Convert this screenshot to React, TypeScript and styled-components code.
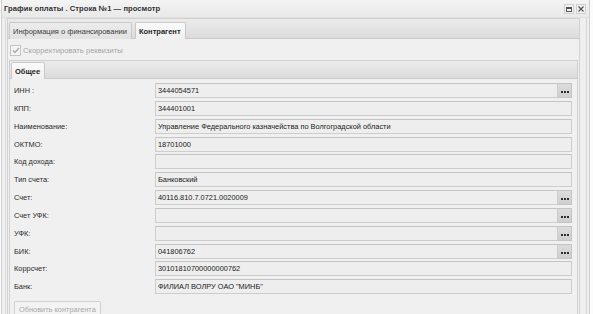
import React from "react";
import styled, { createGlobalStyle } from "styled-components";

const GlobalStyle = createGlobalStyle`
  body {
    margin: 0;
    background: #fbfbfb;
    font-family: "Liberation Sans", Arial, sans-serif;
  }
`;

const Window = styled.div`
  width: 589px;
  height: 330px;
  margin-left: 1px;
  border: 1px solid #cfcfcf;
  border-top: none;
  background: #efefef;
  box-sizing: border-box;
`;

const TitleBar = styled.div`
  height: 17px;
  display: flex;
  align-items: center;
  justify-content: space-between;
  padding: 0 3px 0 2px;
  background: linear-gradient(180deg, #f4f4f4 0%, #e9e9e9 100%);
  border-bottom: 1px solid #e0e0e0;
`;

const Title = styled.span`
  font-size: 7.6px;
  font-weight: bold;
  color: #333;
  letter-spacing: 0.05px;
`;

const Tools = styled.div`
  display: flex;
  gap: 2px;
  margin-top: 1px;
`;

const ToolBtn = styled.div`
  width: 8px;
  height: 8px;
  border: 1px solid #cfcfcf;
  background: #f2f2f2;
  display: flex;
  align-items: center;
  justify-content: center;
`;

const Body = styled.div`
  padding: 0 6px 0 1px;
  border-left: 1px solid #dadada;
  border-right: 1px solid #d4d4d4;
  margin: 0 2px 0 3px;
  height: 320px;
`;

const Panel = styled.div<{ $inner?: boolean }>`
  border: 1px solid #d2d2d2;
  border-top: none;
  margin-left: ${(p) => (p.$inner ? "1px" : "0")};
  margin-right: ${(p) => (p.$inner ? "1px" : "0")};
  background: #f0f0f0;
`;

const Strip = styled.div<{ $h: number }>`
  height: ${(p) => p.$h}px;
  display: flex;
  align-items: flex-end;
  gap: 3px;
  padding-left: 1px;
  background: linear-gradient(180deg, #ebebeb 0%, #dcdcdc 100%);
  border: 1px solid #d0d0d0;
  border-bottom: 1px solid #cacaca;
  margin: 0 -1px;
  box-sizing: border-box;
`;

const Tab = styled.div<{ $active?: boolean }>`
  height: 16px;
  padding: 0 4px 0 3px;
  display: flex;
  align-items: center;
  font-size: 7.5px;
  color: ${(p) => (p.$active ? "#1e1e1e" : "#3a3a3a")};
  font-weight: ${(p) => (p.$active ? "bold" : "normal")};
  border: 1px solid #c9c9c9;
  border-bottom: none;
  border-radius: 2px 2px 0 0;
  margin-bottom: -1px;
  background: ${(p) =>
    p.$active
      ? "linear-gradient(180deg, #fafafa 0%, #f0f0f0 100%)"
      : "linear-gradient(180deg, #ececec 0%, #e2e2e2 100%)"};
`;

const CheckRow = styled.label`
  display: flex;
  align-items: center;
  gap: 2px;
  height: 20px;
  padding: 1px 0 0 2px;
  font-size: 7.6px;
  color: #a6a6a6;
`;

const Check = styled.span`
  width: 9px;
  height: 9px;
  border: 1px solid #c4c4c4;
  background: #f4f4f4;
  display: flex;
  align-items: center;
  justify-content: center;
`;

const Form = styled.div`
  display: grid;
  grid-template-columns: 141px 1fr;
  row-gap: 2.85px;
  padding: 4px 5px 3px 4px;
`;

const Label = styled.div`
  font-size: 7.4px;
  color: #2a2a2a;
  display: flex;
  align-items: center;
  height: 15px;
`;

const Field = styled.div`
  display: flex;
  height: 15px;
`;

const Input = styled.div`
  flex: 1;
  border: 1px solid #cdcdcd;
  border-top-color: #c4c4c4;
  background: #eeeeee;
  font-size: 7.4px;
  color: #1a1a1a;
  display: flex;
  align-items: center;
  padding-left: 2px;
  box-sizing: border-box;
`;

const Trigger = styled.div`
  width: 14px;
  background: linear-gradient(180deg, #dcdcdc 0%, #cfcfcf 100%);
  border: 1px solid #c4c4c4;
  border-left: none;
  display: flex;
  align-items: center;
  justify-content: center;
  box-sizing: border-box;
  padding-top: 3px;
`;

const Dots = styled.span`
  display: flex;
  gap: 1px;
  & > i {
    width: 2px;
    height: 2px;
    background: #2e2e2e;
  }
`;

const Footer = styled.div`
  padding: 1px 0 0 4px;
`;

const Button = styled.div`
  display: inline-flex;
  align-items: center;
  height: 16px;
  padding: 0 4px;
  border: 1px solid #d2d2d2;
  border-radius: 2px;
  background: #f3f3f3;
  font-size: 7.4px;
  color: #a9a9a9;
`;

const rows: { label: string; value: string; trigger?: boolean }[] = [
  { label: "ИНН :", value: "3444054571", trigger: true },
  { label: "КПП:", value: "344401001" },
  { label: "Наименование:", value: "Управление Федерального казначейства по Волгоградской области" },
  { label: "ОКТМО:", value: "18701000" },
  { label: "Код дохода:", value: "" },
  { label: "Тип счета:", value: "Банковский" },
  { label: "Счет:", value: "40116.810.7.0721.0020009", trigger: true },
  { label: "Счет УФК:", value: "", trigger: true },
  { label: "УФК:", value: "", trigger: true },
  { label: "БИК:", value: "041806762", trigger: true },
  { label: "Коррсчет:", value: "30101810700000000762" },
  { label: "Банк:", value: "ФИЛИАЛ ВОЛРУ ОАО \"МИНБ\"" },
];

const App: React.FC = () => {
  return (
    <Window>
      <GlobalStyle />
      <TitleBar>
        <Title>График оплаты . Строка №1 — просмотр</Title>
        <Tools>
          <ToolBtn>
            <svg width="6" height="5" viewBox="0 0 6 5">
              <rect x="0.5" y="0.5" width="5" height="4" fill="none" stroke="#555" />
              <line x1="0" y1="1.5" x2="6" y2="1.5" stroke="#555" />
            </svg>
          </ToolBtn>
          <ToolBtn>
            <svg width="6" height="6" viewBox="0 0 6 6">
              <path d="M0.5 0.5 L5.5 5.5 M5.5 0.5 L0.5 5.5" stroke="#555" strokeWidth="1.2" />
            </svg>
          </ToolBtn>
        </Tools>
      </TitleBar>
      <Body>
        <Panel>
          <Strip $h={21}>
            <Tab>Информация о финансировании</Tab>
            <Tab $active>Контрагент</Tab>
          </Strip>
          <CheckRow>
            <Check>
              <svg width="8" height="7" viewBox="0 0 8 7">
                <path d="M1 3.5 L3 5.5 L7 1" fill="none" stroke="#a9a9a9" strokeWidth="1.4" />
              </svg>
            </Check>
            Скорректировать реквизиты
          </CheckRow>
          <Panel $inner>
            <Strip $h={19}>
              <Tab $active>Общее</Tab>
            </Strip>
            <Form>
              {rows.map((r) => (
                <React.Fragment key={r.label}>
                  <Label>{r.label}</Label>
                  <Field>
                    <Input>{r.value}</Input>
                    {r.trigger && (
                      <Trigger>
                        <Dots>
                          <i />
                          <i />
                          <i />
                        </Dots>
                      </Trigger>
                    )}
                  </Field>
                </React.Fragment>
              ))}
            </Form>
            <Footer>
              <Button>Обновить контрагента</Button>
            </Footer>
          </Panel>
        </Panel>
      </Body>
    </Window>
  );
};

export default App;
